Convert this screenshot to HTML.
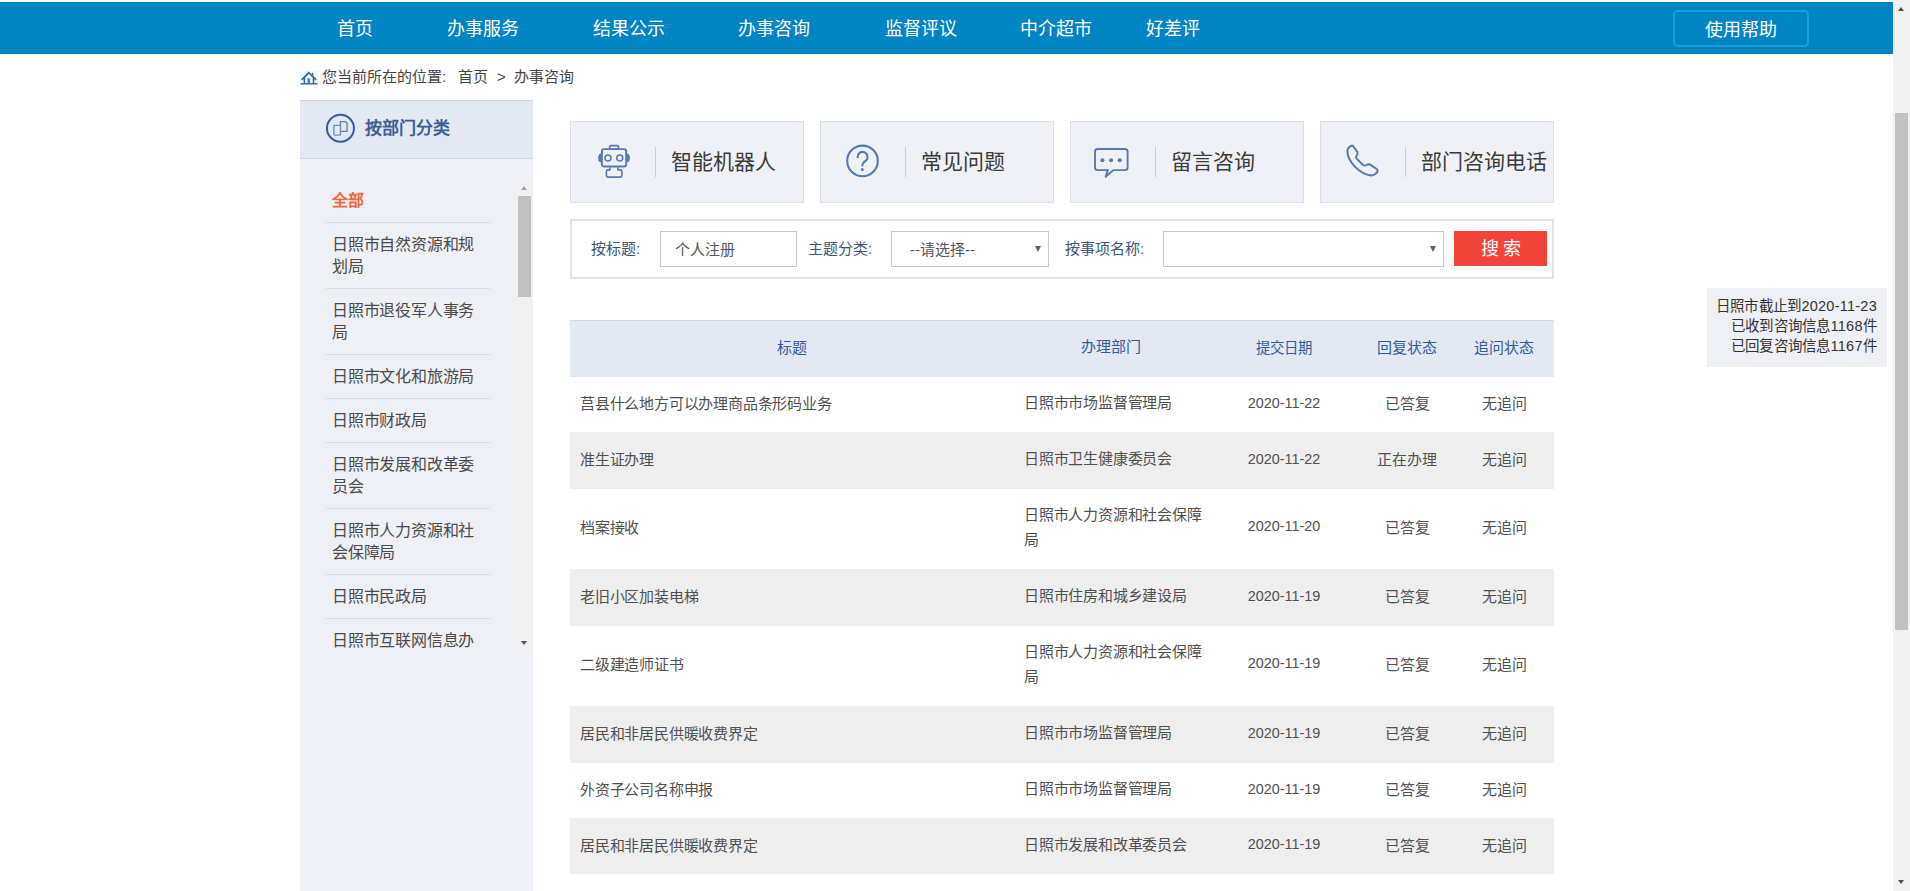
<!DOCTYPE html>
<html lang="zh-CN">
<head>
<meta charset="utf-8">
<title>办事咨询</title>
<style>
*{box-sizing:border-box;margin:0;padding:0}
html,body{width:1910px;height:891px;overflow:hidden;background:#fff}
body{position:relative;font-family:"Liberation Sans",sans-serif;color:#333;font-size:15px}
.abs{position:absolute}
#topbar{position:absolute;left:0;top:2px;width:1893px;height:52px;background:#0084c4}
.nav{position:absolute;top:3px;height:52px;line-height:52px;color:#fff;font-size:18px;white-space:nowrap}
#help{position:absolute;left:1673px;top:10px;width:136px;height:37px;border:2px solid #1a9ce2;border-radius:5px;color:#fff;font-size:18px;line-height:37px;text-align:center}
.crumb{position:absolute;top:66px;height:22px;line-height:22px;font-size:15px;color:#444;white-space:nowrap}
#side{position:absolute;left:300px;top:100px;width:233px;height:791px;background:#eff0f5}
#sidehead{position:absolute;left:0;top:0;width:233px;height:59px;background:#e3e8f2;border-top:1px solid #cfd7e7;border-bottom:1px solid #cfd7e7}
#sidehead .t{position:absolute;left:65px;top:-1px;line-height:57px;font-size:17px;font-weight:bold;color:#3b5e93}
#list{position:absolute;left:26px;top:79px;width:164px;height:474px;overflow:hidden}
#list .it{border-bottom:1px solid #d7dde9;padding:11px 8px 10px 6px;line-height:22px;font-size:16px;color:#4a4a4a;letter-spacing:-0.2px}
#list .it.on{color:#ee6642;font-weight:bold}
.card{position:absolute;top:121px;width:234px;height:82px;background:#eff1f6;border:1px solid #d9e0ec}
.card svg{position:absolute;left:21px;top:18px}
.card .dv{position:absolute;left:84px;top:25px;width:1px;height:30px;background:#c9ced8}
.card .tx{position:absolute;left:100px;top:0;line-height:80px;font-size:21px;color:#3a3a3a;white-space:nowrap}
#search{position:absolute;left:570px;top:219px;width:984px;height:60px;border:2px solid #e2e2e2;background:#fff}
.lbl{position:absolute;top:231px;line-height:36px;font-size:15px;color:#3d5578;white-space:nowrap}
.inp{position:absolute;top:231px;height:36px;border:1px solid #c9c9c9;background:#fff;font-size:15px;color:#555;line-height:36px;white-space:nowrap}
.sarr{position:absolute;top:246px;width:0;height:0;border-left:3px solid transparent;border-right:3px solid transparent;border-top:6px solid #606060}
#btn{position:absolute;left:1454px;top:231px;width:93px;height:35px;background:#f3443a;color:#fff;font-size:18px;line-height:37px;text-align:center;letter-spacing:4px;padding-left:5px}
#tbl{position:absolute;left:570px;top:320px;width:984px}
.row{position:relative;width:984px}
.row div{position:absolute;top:-2px;height:100%;display:flex;align-items:center;font-size:15px;color:#505050}
.hd{background:#e3e8f2;border-top:1px solid #cfd7e7}
.hd div{color:#2f5c98;justify-content:center;top:-3px}
.g{background:#eee}
.t2 .c1,.t2 .c3,.t2 .c4,.t2 .c5{top:-3px}
.c1{left:0;width:444px;padding-left:10px;letter-spacing:-0.2px}
.c2{left:444px;width:194px;padding-left:10px;padding-right:2px;line-height:25px;letter-spacing:-0.2px}
.c3{left:638px;width:152px;justify-content:center;font-size:14.4px!important}
.c4{left:790px;width:94px;justify-content:center}
.c5{left:884px;width:100px;justify-content:center}
#stats{position:absolute;left:1707px;top:288px;width:180px;height:79px;background:#eff0f5;padding:8px 10px 0 0;text-align:right;font-size:14.5px;letter-spacing:0.25px;line-height:20px;color:#333}
#vscroll{position:absolute;left:1893px;top:0;width:17px;height:891px;background:#f1f1f1}
</style>
</head>
<body>
<div id="topbar"></div>
<div class="nav" style="left:337px">首页</div>
<div class="nav" style="left:447px">办事服务</div>
<div class="nav" style="left:593px">结果公示</div>
<div class="nav" style="left:738px">办事咨询</div>
<div class="nav" style="left:885px">监督评议</div>
<div class="nav" style="left:1020px">中介超市</div>
<div class="nav" style="left:1146px">好差评</div>
<div id="help">使用帮助</div>

<svg class="abs" style="left:296px;top:66px" width="26" height="22" viewBox="0 0 26 22"><rect x="4" y="5" width="18" height="14" fill="#f3f7fb"/><g fill="none" stroke="#2c69a5" stroke-linecap="square"><path d="M6.4 13.2 L12.8 6.6 L19.6 13.2" stroke-width="1.7"/><path d="M16.6 7.6 V10" stroke-width="1.4"/><path d="M8.4 12 V17.2 M17.5 12 V17.2" stroke-width="1.5"/><path d="M5.2 17.8 H20.8" stroke-width="1.4"/></g><rect x="11.5" y="12.4" width="2.6" height="4.9" fill="#4d7fb3"/></svg>
<div class="crumb" style="left:322px">您当前所在的位置:</div>
<div class="crumb" style="left:458px">首页</div>
<div class="crumb" style="left:497px">&gt;</div>
<div class="crumb" style="left:514px">办事咨询</div>

<div id="side">
  <div id="sidehead"><svg class="abs" style="left:22px;top:9px" width="36" height="36" viewBox="0 0 36 36"><circle cx="18.45" cy="18.25" r="13.5" fill="none" stroke="#2f5d9a" stroke-width="2"/><path d="M18.4 14.9 V11.7 H23.6 L25.1 13.2 V21.4 H19.2" fill="none" stroke="#5c82b6" stroke-width="1.3"/><rect x="11.9" y="15.3" width="6.6" height="9.8" rx="0.8" fill="none" stroke="#6a8cbd" stroke-width="1.3"/></svg><div class="t">按部门分类</div></div>
  <div id="list">
    <div class="it on">全部</div>
    <div class="it">日照市自然资源和规划局</div>
    <div class="it">日照市退役军人事务局</div>
    <div class="it">日照市文化和旅游局</div>
    <div class="it">日照市财政局</div>
    <div class="it">日照市发展和改革委员会</div>
    <div class="it">日照市人力资源和社会保障局</div>
    <div class="it">日照市民政局</div>
    <div class="it">日照市互联网信息办公室</div>
  </div>
  <div class="abs" style="left:216px;top:79px;width:17px;height:473px;background:#f1f1f1"></div>
  <div class="abs" style="left:218px;top:96px;width:13px;height:101px;background:#c1c1c1"></div>
  <div class="abs" style="left:221px;top:86px;width:0;height:0;border-left:3.5px solid transparent;border-right:3.5px solid transparent;border-bottom:4px solid #a3a3a3"></div>
  <div class="abs" style="left:221px;top:541px;width:0;height:0;border-left:3.5px solid transparent;border-right:3.5px solid transparent;border-top:4px solid #505050"></div>
</div>

<div class="card" style="left:570px"><div class="dv"></div><div class="tx">智能机器人</div></div>
<div class="card" style="left:820px"><div class="dv"></div><div class="tx">常见问题</div></div>
<div class="card" style="left:1070px"><div class="dv"></div><div class="tx">留言咨询</div></div>
<div class="card" style="left:1320px"><div class="dv"></div><div class="tx">部门咨询电话</div></div>

<svg class="abs" style="left:592px;top:140px" width="44" height="42" viewBox="0 0 44 42"><g fill="none" stroke="#5579b0" stroke-linejoin="round"><rect x="17.6" y="5.6" width="8.9" height="3.4" rx="1" stroke-width="1.6"/><rect x="9.9" y="9.1" width="24.3" height="17.4" rx="2.2" stroke-width="1.9"/><circle cx="16" cy="17.9" r="3" stroke-width="1.5"/><circle cx="27.8" cy="17.9" r="3" stroke-width="1.5"/><path d="M17.9 27.3 V29.9 H15.9 Q14.4 29.9 14.4 31.4 V35.6 Q14.4 37.1 15.9 37.1 H28.4 Q29.9 37.1 29.9 35.6 V31.4 Q29.9 29.9 28.4 29.9 H25.9 V27.3" stroke-width="1.6"/></g><g fill="#5579b0"><path d="M9 13.6 L7.2 14.2 Q5 18 7.2 21.8 L9 22.3 Z"/><path d="M35 13.6 L36.8 14.2 Q39 18 36.8 21.8 L35 22.3 Z"/></g></svg>
<svg class="abs" style="left:840px;top:140px" width="44" height="42" viewBox="0 0 44 42"><g fill="none" stroke="#5579b0" stroke-width="2.1" stroke-linecap="round"><circle cx="22.5" cy="20.9" r="15.3"/><path d="M17.6 17.3 A5 5 0 1 1 26 20.6 Q22.4 23 22.4 25.4"/></g><circle cx="22.4" cy="29.5" r="1.5" fill="#5579b0"/></svg>
<svg class="abs" style="left:1089px;top:140px" width="44" height="42" viewBox="0 0 44 42"><path d="M24.4 30.1 H36 Q38.6 30.1 38.6 27.5 V11.6 Q38.6 9 36 9 H8.6 Q6 9 6 11.6 V27.5 Q6 30.1 8.6 30.1 H18.9 L16.6 36.8 Z" fill="none" stroke="#5579b0" stroke-width="1.9" stroke-linejoin="round"/><g fill="#5579b0"><circle cx="13.4" cy="20.3" r="2"/><circle cx="22.1" cy="20.3" r="2"/><circle cx="30.7" cy="20.3" r="2"/></g></svg>
<svg class="abs" style="left:1340px;top:138px" width="44" height="42" viewBox="0 0 44 42"><path d="M7.4 12.5 Q7.8 9.3 11.6 7.6 Q12.4 7.4 13 8 L17.4 14 Q17.9 15.2 17 16.8 Q15.6 18.6 16.4 20.4 L22.8 26.8 Q24.6 28.2 26.6 27 Q28.6 25.6 30.2 26.6 L37 31.3 Q38.3 32.6 37.2 34.2 Q35 37.2 31.4 37.5 Q22.6 36.6 14.6 28.4 Q7.2 20.4 7.4 12.5 Z" fill="none" stroke="#5579b0" stroke-width="2" stroke-linejoin="round"/></svg>
<div id="search"></div>
<div class="lbl" style="left:591px">按标题:</div>
<div class="inp" style="left:660px;width:137px;padding-left:14px">个人注册</div>
<div class="lbl" style="left:808px">主题分类:</div>
<div class="inp" style="left:891px;width:158px;padding-left:18px">--请选择--</div><div class="sarr" style="left:1035px"></div>
<div class="lbl" style="left:1065px">按事项名称:</div>
<div class="inp" style="left:1163px;width:281px"></div><div class="sarr" style="left:1430px"></div>
<div id="btn">搜索</div>

<div id="tbl">
  <div class="row hd" style="height:57px"><div class="c1" style="padding:0">标题</div><div class="c2" style="justify-content:center;padding:0">办理部门</div><div class="c3">提交日期</div><div class="c4">回复状态</div><div class="c5">追问状态</div></div>
  <div class="row" style="height:55px"><div class="c1">莒县什么地方可以办理商品条形码业务</div><div class="c2">日照市市场监督管理局</div><div class="c3">2020-11-22</div><div class="c4">已答复</div><div class="c5">无追问</div></div>
  <div class="row g" style="height:57px"><div class="c1">准生证办理</div><div class="c2">日照市卫生健康委员会</div><div class="c3">2020-11-22</div><div class="c4">正在办理</div><div class="c5">无追问</div></div>
  <div class="row t2" style="height:80px"><div class="c1">档案接收</div><div class="c2">日照市人力资源和社会保障局</div><div class="c3">2020-11-20</div><div class="c4">已答复</div><div class="c5">无追问</div></div>
  <div class="row g" style="height:57px"><div class="c1">老旧小区加装电梯</div><div class="c2">日照市住房和城乡建设局</div><div class="c3">2020-11-19</div><div class="c4">已答复</div><div class="c5">无追问</div></div>
  <div class="row t2" style="height:80px"><div class="c1">二级建造师证书</div><div class="c2">日照市人力资源和社会保障局</div><div class="c3">2020-11-19</div><div class="c4">已答复</div><div class="c5">无追问</div></div>
  <div class="row g" style="height:57px"><div class="c1">居民和非居民供暖收费界定</div><div class="c2">日照市市场监督管理局</div><div class="c3">2020-11-19</div><div class="c4">已答复</div><div class="c5">无追问</div></div>
  <div class="row" style="height:55px"><div class="c1">外资子公司名称申报</div><div class="c2">日照市市场监督管理局</div><div class="c3">2020-11-19</div><div class="c4">已答复</div><div class="c5">无追问</div></div>
  <div class="row g" style="height:56px"><div class="c1">居民和非居民供暖收费界定</div><div class="c2">日照市发展和改革委员会</div><div class="c3">2020-11-19</div><div class="c4">已答复</div><div class="c5">无追问</div></div>
</div>

<div id="stats">日照市截止到2020-11-23<br>已收到咨询信息1168件<br>已回复咨询信息1167件</div>

<div id="vscroll"></div>
<div class="abs" style="left:1895px;top:113px;width:13px;height:517px;background:#c1c1c1"></div>
<div class="abs" style="left:1898px;top:6.5px;width:0;height:0;border-left:3.5px solid transparent;border-right:3.5px solid transparent;border-bottom:4px solid #505050"></div>
<div class="abs" style="left:1898px;top:880px;width:0;height:0;border-left:3.5px solid transparent;border-right:3.5px solid transparent;border-top:4px solid #505050"></div>
</body>
</html>
